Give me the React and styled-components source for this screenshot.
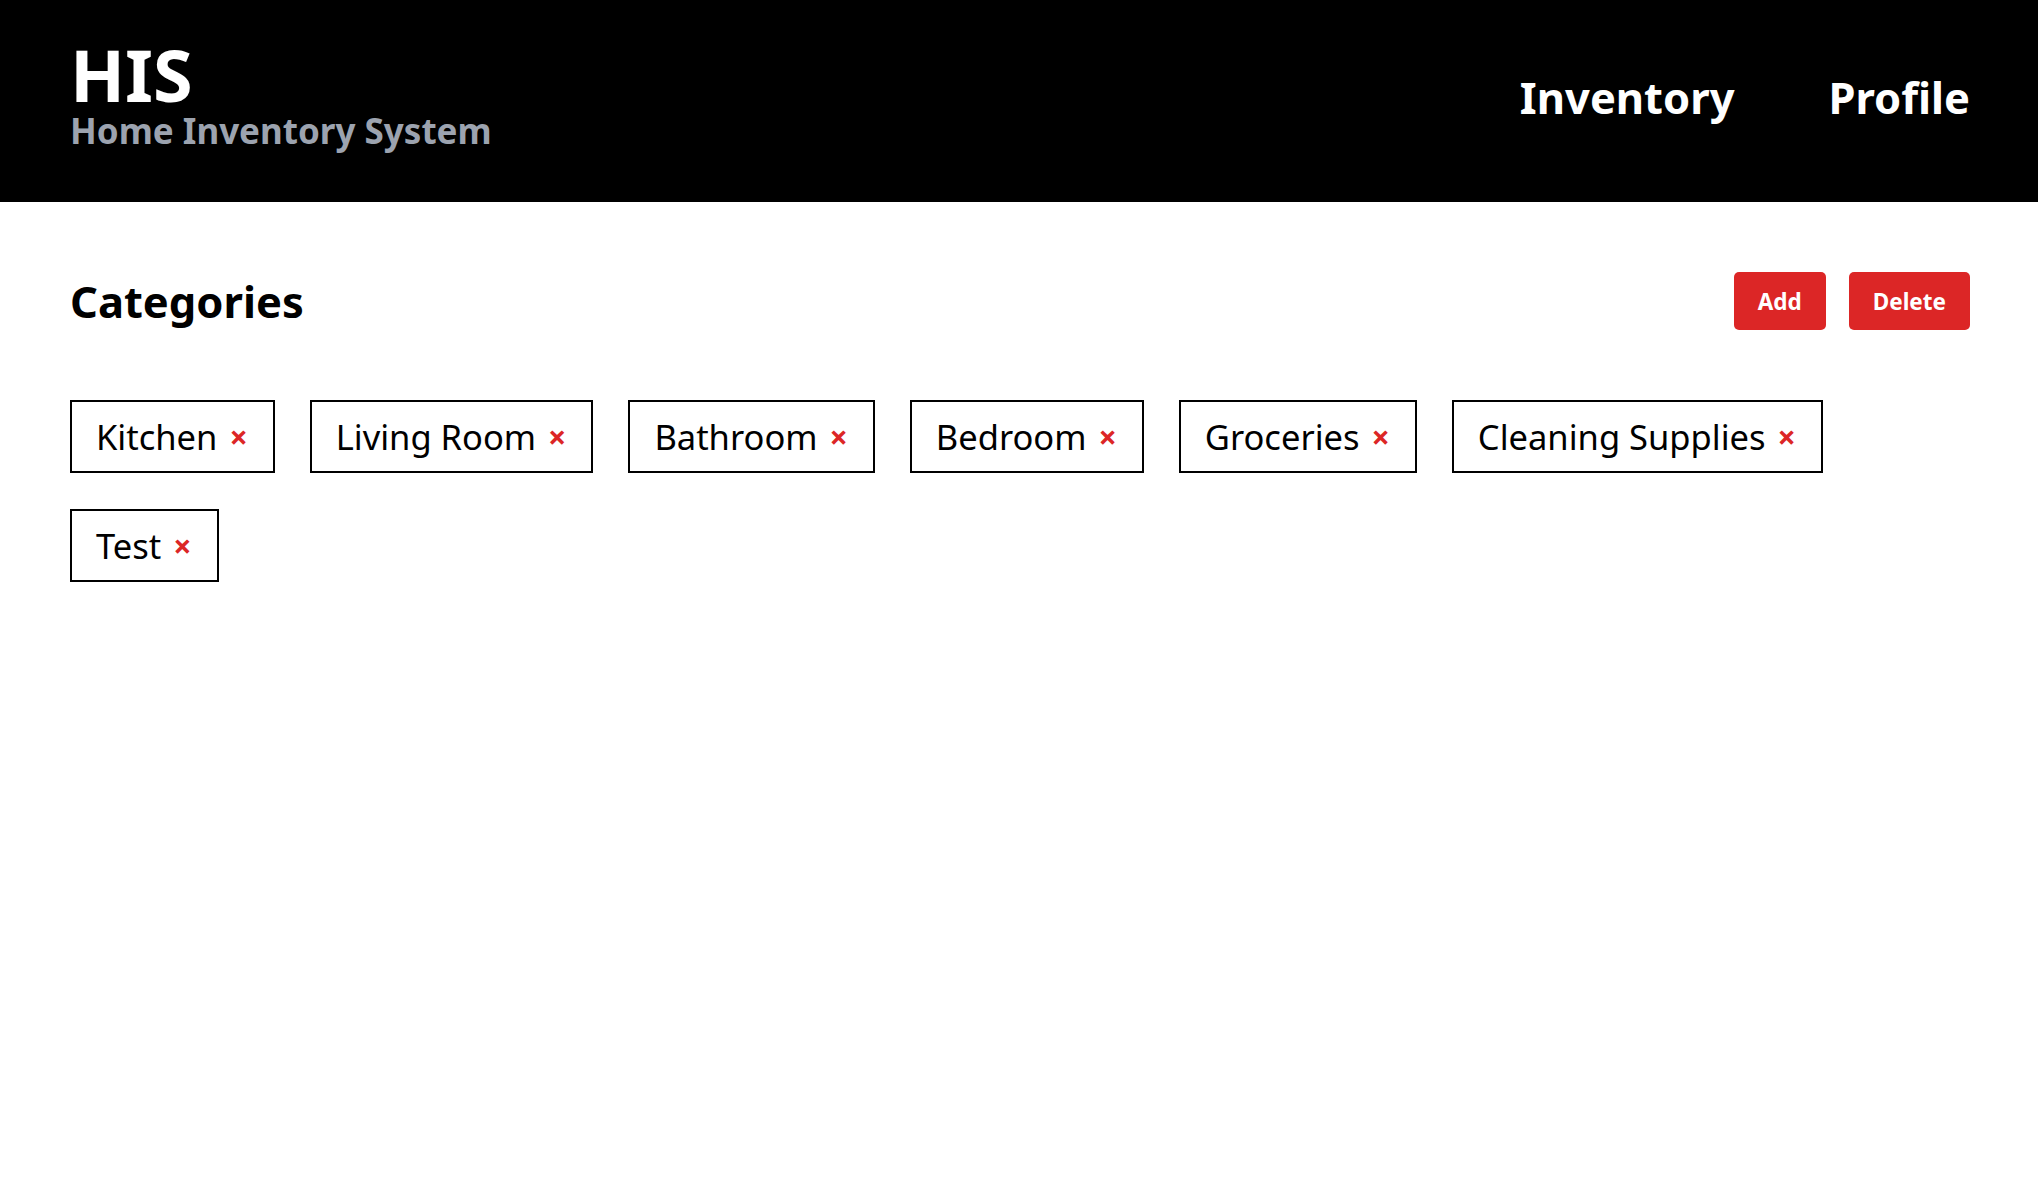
import React from "react";
import styled, { createGlobalStyle } from "styled-components";

const GlobalStyle = createGlobalStyle`
  html, body {
    margin: 0;
    padding: 0;
    background: #ffffff;
    font-family: "Noto Sans", "Open Sans", sans-serif;
    color: #000000;
  }
  * { box-sizing: border-box; }
`;

const Header = styled.header`
  display: flex;
  align-items: center;
  justify-content: space-between;
  height: 202px;
  padding: 0 68px 0 70px;
  background: #000000;
`;

const Brand = styled.div`
  display: flex;
  flex-direction: column;
  padding-bottom: 12px;
`;

const Logo = styled.div`
  font-size: 72px;
  font-weight: 700;
  line-height: 1;
  color: #ffffff;
`;

const Subtitle = styled.div`
  font-size: 35px;
  font-weight: 700;
  line-height: 1.2;
  color: #9ca3af;
`;

const Nav = styled.nav`
  display: flex;
  align-items: center;
  gap: 94px;
  margin-bottom: 8px;
`;

const NavLink = styled.a`
  font-size: 43.5px;
  font-weight: 700;
  color: #ffffff;
  text-decoration: none;
  cursor: pointer;
`;

const Main = styled.main`
  padding: 70px 68px 0 70px;
`;

const Toolbar = styled.div`
  display: flex;
  align-items: center;
  justify-content: space-between;
`;

const Title = styled.h1`
  margin: 0;
  font-size: 43.5px;
  font-weight: 700;
  line-height: 1.2;
`;

const Actions = styled.div`
  display: flex;
  gap: 23px;
`;

const Button = styled.button`
  height: 58px;
  padding: 0 24px;
  border: none;
  border-radius: 5px;
  background: #dc2626;
  color: #ffffff;
  font-family: inherit;
  font-size: 22.5px;
  font-weight: 700;
  cursor: pointer;
`;

const TagList = styled.ul`
  display: flex;
  flex-wrap: wrap;
  gap: 36px 35px;
  margin: 70px 0 0;
  padding: 0;
  list-style: none;
`;

const Tag = styled.li`
  display: flex;
  align-items: center;
  gap: 12px;
  padding: 8px 25px 8px 24px;
  border: 2px solid #000000;
  font-size: 34.5px;
  line-height: 53px;
`;

const Remove = styled.span`
  color: #dc2626;
  font-weight: 700;
  font-size: 32px;
  cursor: pointer;
`;

const categories = [
  "Kitchen",
  "Living Room",
  "Bathroom",
  "Bedroom",
  "Groceries",
  "Cleaning Supplies",
  "Test",
];

export default function App() {
  return (
    <>
      <GlobalStyle />
      <Header>
        <Brand>
          <Logo>HIS</Logo>
          <Subtitle>Home Inventory System</Subtitle>
        </Brand>
        <Nav>
          <NavLink>Inventory</NavLink>
          <NavLink>Profile</NavLink>
        </Nav>
      </Header>
      <Main>
        <Toolbar>
          <Title>Categories</Title>
          <Actions>
            <Button>Add</Button>
            <Button>Delete</Button>
          </Actions>
        </Toolbar>
        <TagList>
          {categories.map((c) => (
            <Tag key={c}>
              {c}
              <Remove>×</Remove>
            </Tag>
          ))}
        </TagList>
      </Main>
    </>
  );
}
